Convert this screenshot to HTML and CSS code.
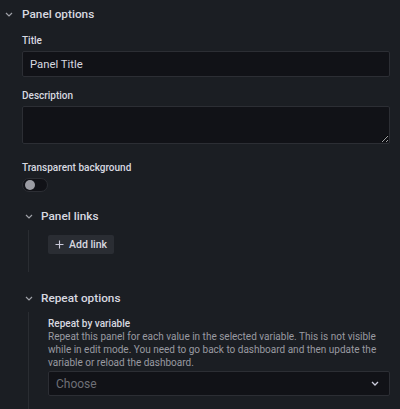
FILE: index.html
```html
<!DOCTYPE html>
<html lang="en">
<head>
    <meta charset="UTF-8">
    <meta name="viewport" content="width=device-width, initial-scale=1.0">
    <title>Panel options</title>
    <link rel="stylesheet" href="styles.css">
</head>
<body>
    <div class="section">
        <div class="section-header">
            <svg class="chevron" width="8" height="5" viewBox="0 0 8 5"><path d="M1 1 L4 4 L7 1" fill="none" stroke="#9fa1a8" stroke-width="1.2"/></svg>
            <span class="section-title">Panel options</span>
        </div>
        <div class="section-body">
            <div class="field field-title">
                <label class="field-label">Title</label>
                <input class="text-input" type="text" value="Panel Title">
            </div>
            <div class="field field-desc">
                <label class="field-label">Description</label>
                <textarea class="text-area"></textarea>
            </div>
            <div class="field field-toggle">
                <label class="field-label">Transparent background</label>
                <div class="toggle"><span class="toggle-knob"></span></div>
            </div>

            <div class="sub-section links">
                <div class="sub-header">
                    <svg class="chevron" width="8" height="5" viewBox="0 0 8 5"><path d="M1 1 L4 4 L7 1" fill="none" stroke="#9fa1a8" stroke-width="1.2"/></svg>
                    <span class="section-title">Panel links</span>
                </div>
                <div class="sub-body">
                    <button class="btn-add">
                        <svg width="9" height="9" viewBox="0 0 9 9"><path d="M4.5 0.5 V8.5 M0.5 4.5 H8.5" stroke="#ccccdc" stroke-width="1.1"/></svg>
                        Add link
                    </button>
                </div>
            </div>

            <div class="sub-section repeat">
                <div class="sub-header">
                    <svg class="chevron" width="8" height="5" viewBox="0 0 8 5"><path d="M1 1 L4 4 L7 1" fill="none" stroke="#9fa1a8" stroke-width="1.2"/></svg>
                    <span class="section-title">Repeat options</span>
                </div>
                <div class="sub-body">
                    <label class="field-label repeat-label">Repeat by variable</label>
                    <p class="field-desc-text">Repeat this panel for each value in the selected variable. This is not visible while in edit mode. You need to go back to dashboard and then update the variable or reload the dashboard.</p>
                    <div class="select">
                        <span class="select-placeholder">Choose</span>
                        <svg width="8" height="5" viewBox="0 0 8 5"><path d="M1 1 L4 4 L7 1" fill="none" stroke="#ccccdc" stroke-width="1.3"/></svg>
                    </div>
                </div>
            </div>
        </div>
    </div>
</body>
</html>
```

FILE: styles.css
```css
html, body {
    margin: 0;
    padding: 0;
    background-color: #1b1e23;
    color: #ccccdc;
    font-family: Roboto, "Noto Sans", sans-serif;
    height: 409px;
    overflow: hidden;
}

.section-header {
    height: 28px;
    display: flex;
    align-items: center;
    padding-left: 5px;
    gap: 9px;
}

.section-title {
    font-size: 11.8px;
    font-weight: 500;
    color: #d8d9e0;
}

.chevron {
    flex: none;
}

.section-body {
    padding: 6px 10px 0 22px;
}

.field-label {
    display: block;
    font-size: 10px;
    font-weight: 500;
    line-height: 14px;
    margin-bottom: 3px;
    color: #d8d9e0;
}

.repeat-label {
    line-height: 13px;
    margin-bottom: 0;
}

.text-input,
.text-area {
    display: block;
    box-sizing: border-box;
    width: 368px;
    background-color: #111217;
    border: 1px solid #2c2e34;
    border-radius: 2px;
    color: #d8d9e0;
    font-family: Roboto, "Noto Sans", sans-serif;
    outline: none;
}

.text-input {
    height: 26px;
    font-size: 11.3px;
    padding: 0 7px;
}

.text-area {
    height: 38px;
    resize: vertical;
    color-scheme: dark;
}

.field-title {
    margin-bottom: 12px;
}

.field-desc {
    margin-bottom: 17px;
}

.toggle {
    box-sizing: border-box;
    width: 26px;
    height: 14px;
    border-radius: 7px;
    background-color: #111217;
    border: 1px solid #2c2e34;
    position: relative;
}

.toggle-knob {
    position: absolute;
    left: 2px;
    top: 1px;
    width: 10px;
    height: 10px;
    border-radius: 50%;
    background-color: #9b9ca3;
}

.sub-header {
    height: 24px;
    display: flex;
    align-items: center;
    padding-left: 3px;
    gap: 8px;
}

.links {
    margin-top: 12px;
}

.repeat {
    margin-top: 14px;
}

.sub-body {
    margin-left: 6px;
    border-left: 1px solid #2a2d32;
    padding-left: 19px;
    margin-top: 2px;
}

.links .sub-body {
    padding-top: 5px;
    padding-bottom: 18px;
}

.repeat .sub-body {
    padding-top: 5px;
    padding-bottom: 20px;
}

.btn-add {
    display: flex;
    align-items: center;
    gap: 5px;
    height: 19px;
    padding: 0 7px;
    background-color: #2a2d33;
    border: none;
    border-radius: 2px;
    color: #d8d9e0;
    font-family: Roboto, "Noto Sans", sans-serif;
    font-size: 10.5px;
    font-weight: 500;
}

.field-desc-text {
    margin: 0 0 2px;
    font-size: 10px;
    line-height: 13px;
    color: #999aa1;
}

.select {
    box-sizing: border-box;
    width: 342px;
    height: 25px;
    display: flex;
    align-items: center;
    justify-content: space-between;
    padding: 0 10px 0 7px;
    background-color: #111217;
    border: 1px solid #2c2e34;
    border-radius: 2px;
}

.select-placeholder {
    font-size: 12px;
    color: #6e6f76;
}
```
